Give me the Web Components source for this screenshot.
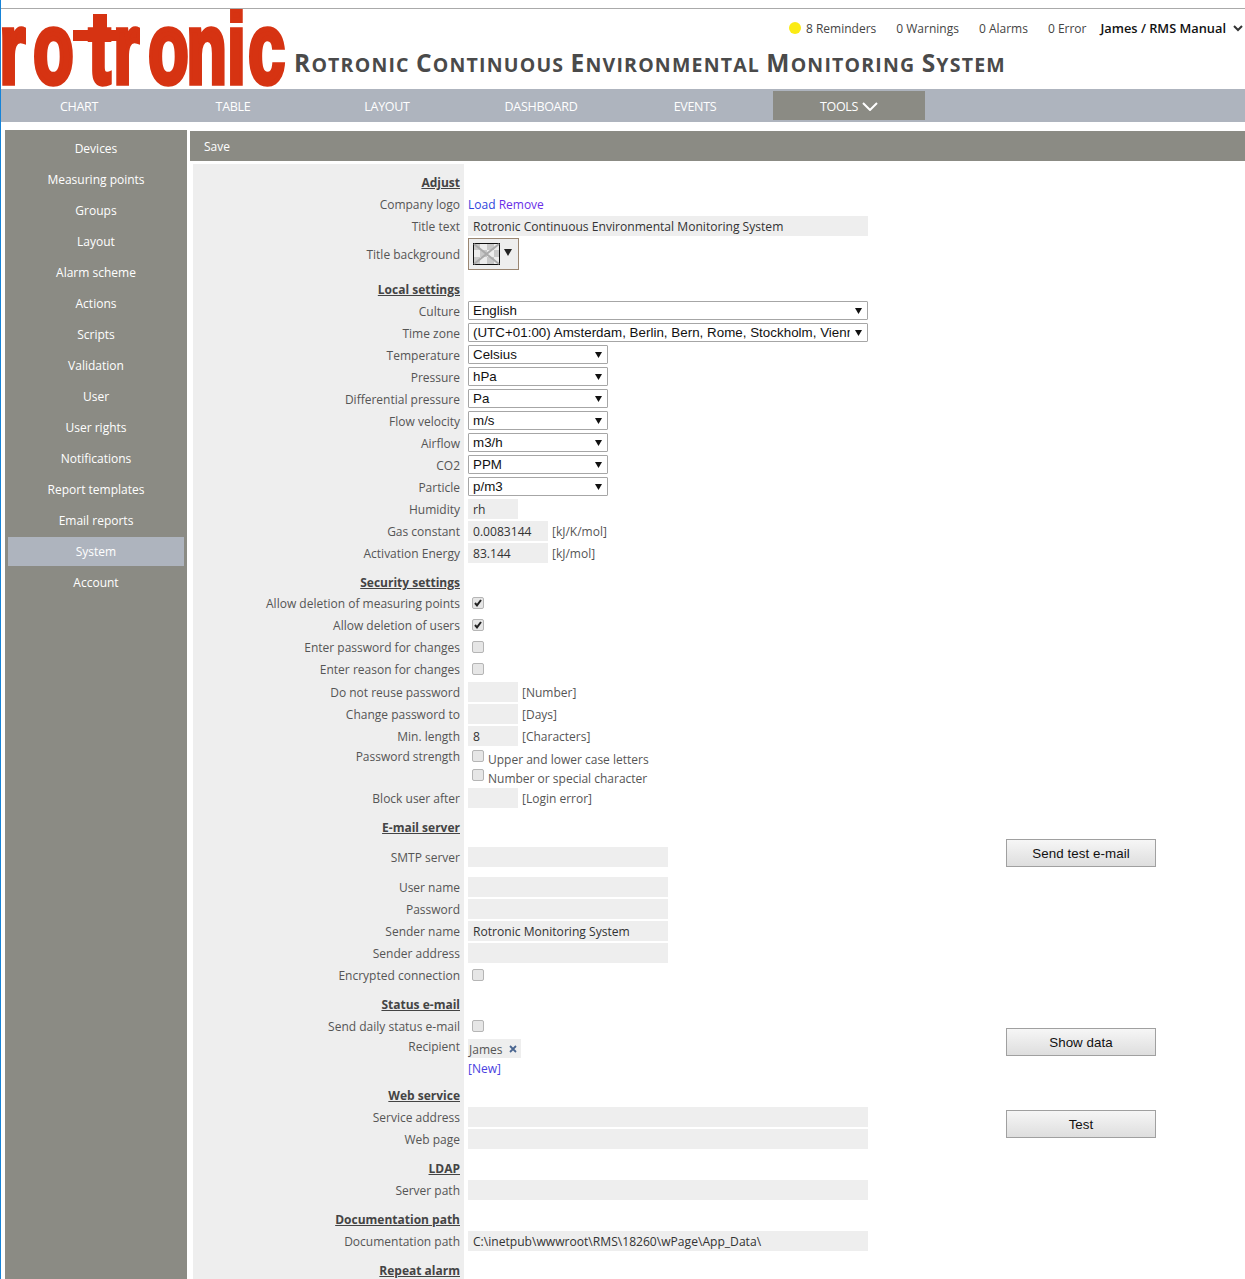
<!DOCTYPE html>
<html lang="en">
<head>
<meta charset="utf-8">
<title>Rotronic RMS - System</title>
<style>
  html, body { margin: 0; height: 1279px; overflow: hidden; background: #fff; }
  body { border-left: 1px solid #1683d8; box-sizing: border-box; font-family: "Open Sans", sans-serif; font-size: 12px; color: #555; }
  .content { display: flex; align-items: stretch; height: 1157px; }
</style>
</head>
<body>
<rms-header></rms-header>
<rms-nav></rms-nav>
<div class="content">
  <rms-sidebar></rms-sidebar>
  <rms-main>
    <set-section title="Adjust">
      <set-row label="Company logo"><span style="color:#2f45dc">Load</span>&nbsp;<span style="color:#6a2fe8">Remove</span></set-row>
      <set-row label="Title text"><set-input w="400">Rotronic Continuous Environmental Monitoring System</set-input></set-row>
      <set-row label="Title background" h="34"><title-swatch></title-swatch></set-row>
    </set-section>
    <set-section title="Local settings">
      <set-row label="Culture"><set-select w="400">English</set-select></set-row>
      <set-row label="Time zone"><set-select w="400">(UTC+01:00) Amsterdam, Berlin, Bern, Rome, Stockholm, Vienna</set-select></set-row>
      <set-row label="Temperature"><set-select w="140">Celsius</set-select></set-row>
      <set-row label="Pressure"><set-select w="140">hPa</set-select></set-row>
      <set-row label="Differential pressure"><set-select w="140">Pa</set-select></set-row>
      <set-row label="Flow velocity"><set-select w="140">m/s</set-select></set-row>
      <set-row label="Airflow"><set-select w="140">m3/h</set-select></set-row>
      <set-row label="CO2"><set-select w="140">PPM</set-select></set-row>
      <set-row label="Particle"><set-select w="140">p/m3</set-select></set-row>
      <set-row label="Humidity"><set-input w="50">rh</set-input></set-row>
      <set-row label="Gas constant"><set-input w="80">0.0083144</set-input><set-unit>[kJ/K/mol]</set-unit></set-row>
      <set-row label="Activation Energy"><set-input w="80">83.144</set-input><set-unit>[kJ/mol]</set-unit></set-row>
    </set-section>
    <set-section title="Security settings" head="21">
      <set-row label="Allow deletion of measuring points"><set-check checked></set-check></set-row>
      <set-row label="Allow deletion of users"><set-check checked></set-check></set-row>
      <set-row label="Enter password for changes"><set-check></set-check></set-row>
      <set-row label="Enter reason for changes"><set-check></set-check></set-row>
      <set-row label="Do not reuse password" style="margin-top:1px"><set-input w="50"></set-input><set-unit>[Number]</set-unit></set-row>
      <set-row label="Change password to"><set-input w="50"></set-input><set-unit>[Days]</set-unit></set-row>
      <set-row label="Min. length"><set-input w="50">8</set-input><set-unit>[Characters]</set-unit></set-row>
      <set-row label="Password strength" h="40" top>
        <set-stack>
          <set-check label="Upper and lower case letters"></set-check>
          <set-check label="Number or special character"></set-check>
        </set-stack>
      </set-row>
      <set-row label="Block user after"><set-input w="50"></set-input><set-unit>[Login error]</set-unit></set-row>
    </set-section>
    <set-section title="E-mail server">
      <set-row label="SMTP server" h="38"><set-input w="200"></set-input><rms-button slot="aside" style="margin-top:1px">Send test e-mail</rms-button></set-row>
      <set-row label="User name"><set-input w="200"></set-input></set-row>
      <set-row label="Password"><set-input w="200"></set-input></set-row>
      <set-row label="Sender name"><set-input w="200">Rotronic Monitoring System</set-input></set-row>
      <set-row label="Sender address"><set-input w="200"></set-input></set-row>
      <set-row label="Encrypted connection"><set-check></set-check></set-row>
    </set-section>
    <set-section title="Status e-mail">
      <set-row label="Send daily status e-mail"><set-check></set-check><rms-button slot="aside" style="margin-top:13px">Show data</rms-button></set-row>
      <set-row label="Recipient" h="40" top><recipient-list></recipient-list></set-row>
    </set-section>
    <set-section title="Web service">
      <set-row label="Service address"><set-input w="400"></set-input><rms-button slot="aside" style="margin-top:4px">Test</rms-button></set-row>
      <set-row label="Web page"><set-input w="400"></set-input></set-row>
    </set-section>
    <set-section title="LDAP">
      <set-row label="Server path"><set-input w="400"></set-input></set-row>
    </set-section>
    <set-section title="Documentation path">
      <set-row label="Documentation path"><set-input w="400">C:\inetpub\wwwroot\RMS\18260\wPage\App_Data\</set-input></set-row>
    </set-section>
    <set-section title="Repeat alarm"></set-section>
  </rms-main>
</div>

<script>
// Top of the page: logo, title and the status line
class RmsHeader extends HTMLElement {
  constructor() {
    super();
    this.attachShadow({ mode: 'open' });
    const title = 'Rotronic Continuous Environmental Monitoring System'.split(' ')
      .map(w => `<span class="cap">${w[0]}</span>${w.slice(1)}`).join(' ');
    this.shadowRoot.innerHTML = `
      <style>
        :host { display: block; margin-top: 8px; border-top: 1px solid #aaa; height: 80px; position: relative; }
        .brand { display: flex; align-items: flex-end; height: 80px; }
        svg { display: block; flex: none; }
        h1 { margin: 0 0 12px 8px; font: bold 19.5px/1.2 "Open Sans", sans-serif; text-transform: uppercase; color: #4a4a4a; white-space: nowrap; letter-spacing: 1.2px; }
        h1 .cap { font-size: 24.5px; }
        .status { position: absolute; right: 2px; top: 10px; display: flex; align-items: center; font-size: 12px; color: #444; white-space: nowrap; }
        .status span { margin-left: 20px; }
        .dot { width: 12px; height: 12px; border-radius: 50%; background: #fbeb14; }
        .status .dot + span { margin-left: 5px; }
        .status b { margin-left: 14px; color: #111; font-weight: 600; font-size: 12.8px; }
        .status svg { margin-left: 7px; }
      </style>
      <div class="brand">
        <svg width="285" height="80" viewBox="0 0 285 80">
          <g fill="#d63312">
            <text transform="scale(.66 1)" x="-2.400 48.800 133 170.300 223 280.900 342.700 374.500" y="74" font-family="Liberation Sans" font-weight="bold" font-size="100" stroke="#d63312" stroke-width="5.500">rotronic</text>
            <rect x="92" y="5" width="14" height="24"/>
            <rect x="72" y="21" width="46" height="11"/>
          </g>
        </svg>
        <h1>${title}</h1>
      </div>
      <div class="status">
        <i class="dot"></i><span>8 Reminders</span><span>0 Warnings</span><span>0 Alarms</span><span>0 Error</span>
        <b>James / RMS Manual</b>
        <svg width="10" height="8" viewBox="0 0 10 8"><path d="M1 2l4 4 4-4" fill="none" stroke="#333" stroke-width="2"/></svg>
      </div>`;
  }
}

class RmsNav extends HTMLElement {
  constructor() {
    super();
    this.attachShadow({ mode: 'open' });
    const links = ['CHART', 'TABLE', 'LAYOUT', 'DASHBOARD', 'EVENTS'];
    this.shadowRoot.innerHTML = `
      <style>
        :host { display: flex; gap: 2px; height: 33px; box-sizing: border-box; padding: 2px 0 2px 2px; background: #aeb4be; margin-bottom: 8px; }
        a { width: 152px; display: flex; align-items: center; justify-content: center; gap: 4px; padding-top: 2px; box-sizing: border-box; color: #fff; font-size: 12.5px; letter-spacing: -0.3px; }
        a.open { background: #8b8b84; }
        svg { margin-top: -1px; }
      </style>
      ${links.map(l => `<a>${l}</a>`).join('')}
      <a class="open">TOOLS <svg width="16" height="9" viewBox="0 0 16 9"><path d="M1 1l7 7 7-7" fill="none" stroke="#fff" stroke-width="2"/></svg></a>`;
  }
}

class RmsSidebar extends HTMLElement {
  constructor() {
    super();
    this.attachShadow({ mode: 'open' });
    const items = ['Devices', 'Measuring points', 'Groups', 'Layout', 'Alarm scheme', 'Actions', 'Scripts', 'Validation',
      'User', 'User rights', 'Notifications', 'Report templates', 'Email reports', 'System', 'Account'];
    this.shadowRoot.innerHTML = `
      <style>
        :host { display: flex; flex-direction: column; gap: 2px; flex: none; width: 182px; box-sizing: border-box; margin-left: 4px; padding: 4px 3px; background: #8b8b84; }
        a { height: 29px; display: flex; align-items: center; justify-content: center; color: #fff; font-size: 12px; }
        a.on { background: #aeb4be; }
      </style>
      ${items.map(i => `<a class="${i === 'System' ? 'on' : ''}">${i}</a>`).join('')}`;
  }
}

class RmsMain extends HTMLElement {
  constructor() {
    super();
    this.attachShadow({ mode: 'open' });
    this.shadowRoot.innerHTML = `
      <style>
        :host { display: block; flex: 1; margin: 1px 0 0 3px; min-width: 0; }
        .save { height: 30px; line-height: 31px; padding-left: 14px; background: #8b8b84; color: #fff; }
        .form { margin: 3px 0 0 3px; padding-bottom: 20px; background: linear-gradient(90deg, #eee 271px, transparent 271px); }
      </style>
      <div class="save">Save</div>
      <div class="form"><slot></slot></div>`;
  }
}

class SetSection extends HTMLElement {
  constructor() {
    super();
    this.attachShadow({ mode: 'open' });
    const h = this.getAttribute('head') || 22;
    this.shadowRoot.innerHTML = `
      <style>
        :host { display: block; padding-top: 7px; }
        h2 { margin: 0; width: 267px; height: ${h}px; line-height: 24px; text-align: right; font-size: 12px; font-weight: 700; color: #444; text-decoration: underline; }
      </style>
      <h2>${this.getAttribute('title')}</h2>
      <slot></slot>`;
    this.removeAttribute('title');
  }
}

class SetRow extends HTMLElement {
  constructor() {
    super();
    this.attachShadow({ mode: 'open' });
    const h = this.getAttribute('h') || 22;
    const top = this.hasAttribute('top');
    this.shadowRoot.innerHTML = `
      <style>
        :host { display: grid; grid-template-columns: 267px 546px 150px; grid-template-rows: ${h}px; height: ${h}px; }
        .label { text-align: right; white-space: nowrap; ${top ? 'line-height: 20px;' : 'align-self: center;'} }
        .value { display: flex; align-items: center; padding-left: 8px; ${top ? 'align-self: start;' : ''} color: #555; }
      </style>
      <div class="label">${this.getAttribute('label')}</div>
      <div class="value"><slot></slot></div>
      <div class="aside"><slot name="aside"></slot></div>`;
  }
}

class SetInput extends HTMLElement {
  constructor() {
    super();
    this.attachShadow({ mode: 'open' });
    this.shadowRoot.innerHTML = `
      <style>
        :host { display: block; flex: none; width: ${this.getAttribute('w')}px; height: 20px; box-sizing: border-box; padding-left: 5px; line-height: 21px; background: #eee; color: #333; font-size: 12.1px; white-space: nowrap; overflow: hidden; }
      </style>
      <slot></slot>`;
  }
}

class SetUnit extends HTMLElement {
  constructor() {
    super();
    this.attachShadow({ mode: 'open' });
    this.shadowRoot.innerHTML = `<style>:host { display: block; margin-left: 4px; white-space: nowrap; }</style><slot></slot>`;
  }
}

class SetSelect extends HTMLElement {
  constructor() {
    super();
    this.attachShadow({ mode: 'open' });
    this.shadowRoot.innerHTML = `
      <style>
        :host { display: flex; align-items: center; flex: none; width: ${this.getAttribute('w')}px; height: 19px; box-sizing: border-box; margin-top: -1px; padding: 0 5px 1px 4px; border: 1px solid #a6a6a6; border-radius: 1px; background: #fff; font: 13.33px "Liberation Sans", sans-serif; letter-spacing: 0.03px; color: #111; white-space: nowrap; }
        .text { flex: 1; overflow: hidden; margin-right: 5px; }
        svg { flex: none; }
      </style>
      <div class="text"><slot></slot></div>
      <svg width="7" height="7" viewBox="0 0 7 7"><path d="M0 1h7L3.5 7z" fill="#111"/></svg>`;
  }
}

class SetCheck extends HTMLElement {
  constructor() {
    super();
    this.attachShadow({ mode: 'open' });
    const tick = this.hasAttribute('checked')
      ? '<svg width="10" height="10" viewBox="0 0 10 10"><path d="M2 5l2 2.400L8 2" fill="none" stroke="#222" stroke-width="2"/></svg>' : '';
    const label = this.getAttribute('label');
    this.shadowRoot.innerHTML = `
      <style>
        :host { display: flex; align-items: flex-start; height: 19px; margin-left: 4px; white-space: nowrap; }
        .box { width: 12px; height: 12px; box-sizing: border-box; border: 1px solid #b5b5b5; border-radius: 2px; background: #e6e6e6; display: flex; align-items: center; justify-content: center; margin-top: 3px; }
        .text { margin: 4px 0 0 4px; }
        :host(:not([label])) { height: 18px; align-items: center; }
        :host(:not([label])) .box { margin-top: 0; }
      </style>
      <div class="box">${tick}</div>
      ${label ? `<div class="text">${label}</div>` : ''}`;
  }
}

class SetStack extends HTMLElement {
  constructor() {
    super();
    this.attachShadow({ mode: 'open' });
    this.shadowRoot.innerHTML = `<style>:host { display: block; }</style><slot></slot>`;
  }
}

class TitleSwatch extends HTMLElement {
  constructor() {
    super();
    this.attachShadow({ mode: 'open' });
    this.shadowRoot.innerHTML = `
      <style>
        :host { display: flex; align-items: center; gap: 4px; width: 51px; height: 32px; box-sizing: border-box; padding-left: 4px; border: 1px solid #9a8672; background: #eee; }
        svg { display: block; flex: none; }
      </style>
      <svg width="27" height="22" viewBox="0 0 27 22">
        <defs><pattern id="chk" width="14" height="14" patternUnits="userSpaceOnUse"><rect width="14" height="14" fill="#ececec"/><rect width="7" height="7" fill="#c8c8c8"/><rect x="7" y="7" width="7" height="7" fill="#c8c8c8"/></pattern></defs>
        <rect x=".5" y=".5" width="26" height="21" fill="url(#chk)" stroke="#111"/>
        <path d="M1 1l25 20M26 1L1 21" stroke="#aaa" stroke-width="2"/>
      </svg>
      <svg width="8" height="7" viewBox="0 0 8 7" style="margin-top:-3px"><path d="M0 0h8L4 7z" fill="#222"/></svg>`;
  }
}

class RecipientList extends HTMLElement {
  constructor() {
    super();
    this.attachShadow({ mode: 'open' });
    this.shadowRoot.innerHTML = `
      <style>
        :host { display: block; padding-top: 2px; }
        .chip { display: flex; align-items: center; width: 53px; height: 19px; box-sizing: border-box; padding: 1px 0 0 1px; background: #eee; }
        .chip svg { margin-left: 7px; margin-top: -1px; }
        a { display: block; margin-top: 1px; line-height: 19px; color: #4a3fe0; }
      </style>
      <div class="chip">James <svg width="8" height="8" viewBox="0 0 8 8"><path d="M1 1l6 6M7 1L1 7" stroke="#4a6690" stroke-width="1.8"/></svg></div>
      <a>[New]</a>`;
  }
}

class RmsButton extends HTMLElement {
  constructor() {
    super();
    this.attachShadow({ mode: 'open' });
    this.shadowRoot.innerHTML = `
      <style>
        :host { display: flex; align-items: center; justify-content: center; width: 150px; height: 28px; box-sizing: border-box; border: 1px solid #a0a0a0; background: linear-gradient(#f6f6f6, #dedede); font: 13.33px "Liberation Sans", sans-serif; letter-spacing: 0.07px; color: #111; }
      </style>
      <slot></slot>`;
  }
}

customElements.define('rms-header', RmsHeader);
customElements.define('rms-nav', RmsNav);
customElements.define('rms-sidebar', RmsSidebar);
customElements.define('rms-main', RmsMain);
customElements.define('set-section', SetSection);
customElements.define('set-row', SetRow);
customElements.define('set-input', SetInput);
customElements.define('set-unit', SetUnit);
customElements.define('set-select', SetSelect);
customElements.define('set-check', SetCheck);
customElements.define('set-stack', SetStack);
customElements.define('title-swatch', TitleSwatch);
customElements.define('recipient-list', RecipientList);
customElements.define('rms-button', RmsButton);
</script>
</body>
</html>
